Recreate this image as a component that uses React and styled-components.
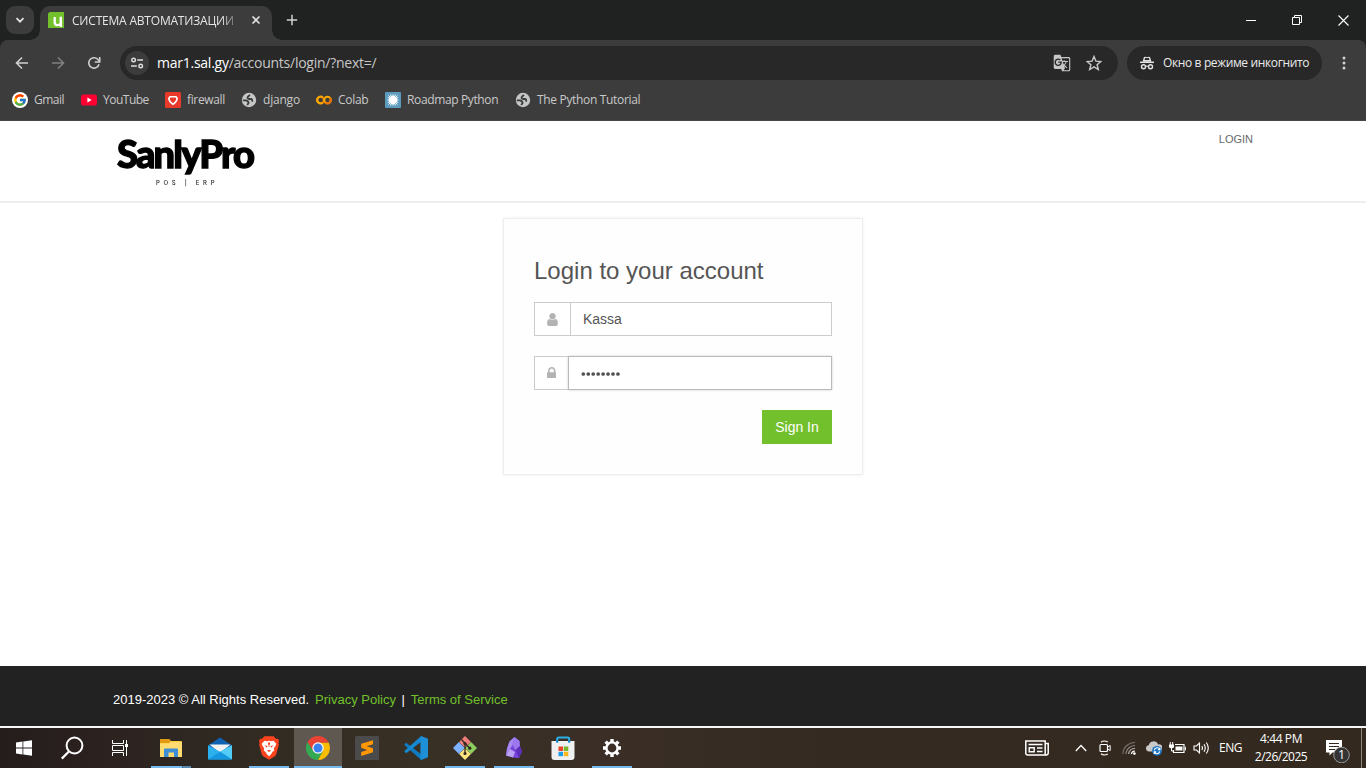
import React from "react";
import styled, { createGlobalStyle } from "styled-components";
import { FcGoogle } from "react-icons/fc";
import { MdGTranslate } from "react-icons/md";

const UI = `"Open Sans", "Noto Sans", sans-serif`;
const ARIAL = `"Liberation Sans", Arial, sans-serif`;

const Global = createGlobalStyle`
  * { box-sizing: border-box; }
  html, body { margin: 0; padding: 0; height: 768px; overflow: hidden; background: #fff; }
  svg { display: block; flex: none; }
`;

const Screen = styled.div`
  width: 1366px;
  height: 768px;
  display: flex;
  flex-direction: column;
  overflow: hidden;
  font-family: ${UI};
`;

const Label = styled.span`
  font-size: ${(p) => p.$size || 12}px;
  letter-spacing: ${(p) => p.$track || 0}px;
  line-height: 16px;
  white-space: nowrap;
`;

/* ---------- browser frame ---------- */

const TabStrip = styled.header`
  height: 40px;
  background: #202221;
  display: flex;
  align-items: flex-end;
  padding-left: 6px;
`;

const TabSearch = styled.div`
  width: 28px;
  height: 28px;
  margin-bottom: 6px;
  border-radius: 9px;
  background: #3c3c3c;
  display: flex;
  align-items: center;
  justify-content: center;
`;

const Tab = styled.div`
  position: relative;
  width: 232px;
  height: 34px;
  margin-left: 6px;
  padding: 0 9px 6px 8px;
  border-radius: 10px 10px 0 0;
  background: #3c3c3c;
  display: flex;
  align-items: center;
  color: #e6e6e6;
  &::before, &::after {
    content: "";
    position: absolute;
    bottom: 0;
    width: 10px;
    height: 10px;
  }
  &::before { left: -10px; background: radial-gradient(circle at 0 0, transparent 9.5px, #3c3c3c 10px); }
  &::after { right: -10px; background: radial-gradient(circle at 100% 0, transparent 9.5px, #3c3c3c 10px); }
`;

const TabTitle = styled.div`
  width: 166px;
  margin-left: 8px;
  margin-right: 11px;
  padding-top: 1px;
  display: flex;
  mask-image: linear-gradient(to right, #000 150px, transparent 168px);
`;

const NewTab = styled.div`
  width: 28px;
  height: 40px;
  margin-left: 6px;
  display: flex;
  align-items: center;
  justify-content: center;
`;

const WindowButtons = styled.div`
  margin-left: auto;
  display: flex;
`;

const WindowButton = styled.div`
  width: 46px;
  height: 40px;
  display: flex;
  align-items: center;
  justify-content: center;
`;

const ToolbarBack = styled.div`
  background: #202221;
`;

const Toolbar = styled.div`
  height: 46px;
  background: #3c3c3c;
  border-radius: 8px 8px 0 0;
  display: flex;
  align-items: center;
  padding-left: 4px;
`;

const NavButton = styled.div`
  width: 36px;
  height: 34px;
  display: flex;
  align-items: center;
  justify-content: center;
`;

const Omnibox = styled.div`
  width: 998px;
  height: 34px;
  margin-left: 8px;
  border-radius: 17px;
  background: #282828;
  padding: 0 16px 0 5px;
  display: flex;
  align-items: center;
  color: #c7c7c7;
`;

const SiteInfo = styled.div`
  width: 24px;
  height: 24px;
  border-radius: 50%;
  background: #3c3c3c;
  display: flex;
  align-items: center;
  justify-content: center;
  margin-right: 8px;
`;

const Host = styled.span`
  color: #fff;
`;

const OmniActions = styled.div`
  margin-left: auto;
  display: flex;
  gap: 15px;
  align-items: center;
`;

const Incognito = styled.div`
  width: 195px;
  height: 34px;
  margin-left: 9px;
  border-radius: 17px;
  background: #282828;
  padding-left: 12px;
  display: flex;
  align-items: center;
  gap: 8px;
  color: #eaeaea;
`;

const MenuDots = styled.div`
  width: 44px;
  display: flex;
  justify-content: center;
`;

const Bookmarks = styled.nav`
  height: 35px;
  background: #3c3c3c;
  border-bottom: 1px solid #474747;
  padding: 0 0 6px 12px;
  display: flex;
  align-items: center;
  color: #c9c9c9;
`;

const Bookmark = styled.div`
  width: ${(p) => p.$width}px;
  display: flex;
  align-items: center;
  gap: 6px;
`;

const WhiteDisc = styled.span`
  width: 16px;
  height: 16px;
  border-radius: 50%;
  background: #fff;
  display: flex;
  align-items: center;
  justify-content: center;
`;

/* ---------- web page ---------- */

const Page = styled.main`
  height: 607px;
  background: #fff;
  font-family: ${ARIAL};
  display: flex;
  flex-direction: column;
  border-bottom: 2px solid #f7f7f5;
`;

const SiteHeader = styled.div`
  height: 82px;
  border-bottom: 2px solid #eee;
  padding: 0 113px 0 117px;
  display: flex;
  justify-content: space-between;
`;

const Logo = styled.div`
  width: 140px;
  padding-top: 10px;
  color: #000;
  display: flex;
  flex-direction: column;
  will-change: transform;
`;

const LogoName = styled.div`
  font: 900 38px/44px Lato, sans-serif;
  letter-spacing: -1.8px;
  white-space: nowrap;
  -webkit-text-stroke: 1.3px #000;
`;

const LogoTag = styled.div`
  font: 500 6px/8px Inter, sans-serif;
  letter-spacing: 3.700px;
  margin: 4px 0 0 39px;
  white-space: pre;
  color: #222;
`;

const LoginLink = styled.a`
  margin-top: 12px;
  height: 13px;
  font-size: 11px;
  line-height: 13px;
  color: #66696b;
`;

const Body = styled.div`
  flex: 1;
  padding-top: 15px;
  display: flex;
  justify-content: center;
  align-items: flex-start;
`;

const Card = styled.form`
  width: 360px;
  height: 257px;
  border: 1px solid #eee;
  background: #fefefe;
  box-shadow: 0 0 3px #eee;
  padding: 36px 30px 30px;
  display: flex;
  flex-direction: column;
`;

const Title = styled.h2`
  margin: 0 0 15px;
  font-size: 24px;
  font-weight: 400;
  line-height: 32px;
  color: #555;
  white-space: nowrap;
`;

const Field = styled.div`
  display: flex;
  height: 34px;
  margin-bottom: 20px;
`;

const Addon = styled.span`
  width: ${(p) => p.$width}px;
  border: 1px solid #ccc;
  border-right: 0;
  background: #fff;
  padding-bottom: ${(p) => p.$lift || 0}px;
  display: flex;
  align-items: center;
  justify-content: center;
`;

const Input = styled.div`
  flex: 1;
  border: 1px solid ${(p) => (p.$focus ? "#bbb" : "#ccc")};
  box-shadow: ${(p) => (p.$focus ? "0 0 2px #c9c9c9" : "none")};
  background: #fff;
  padding-left: 12px;
  display: flex;
  align-items: center;
  font-size: 14px;
  color: #555;
`;

const SignIn = styled.button`
  align-self: flex-end;
  width: 70px;
  height: 34px;
  border: 0;
  padding: 0;
  background: #72c02c;
  color: #fff;
  font: 14px/20px ${ARIAL};
`;

const Footer = styled.footer`
  height: 60px;
  background: #222;
  color: #fff;
  padding: 7px 0 0 113px;
  display: flex;
  align-items: center;
  font-size: 13px;
  white-space: pre;
`;

const FooterLink = styled.a`
  margin: 0 5.500px 0 6px;
  color: #72c02c;
`;

/* ---------- taskbar ---------- */

const Taskbar = styled.footer`
  height: 40px;
  background: linear-gradient(90deg, #241d1c 0, #2c2220 110px, #302a22 230px, #383024 420px, #3a2e26 600px, #342a21 850px, #33291f 100%);
  display: flex;
  color: #fff;
`;

const TaskButton = styled.div`
  width: ${(p) => p.$width || 48}px;
  height: 40px;
  margin-right: ${(p) => p.$after || 0}px;
  background: ${(p) => (p.$active ? "#5f5850" : "transparent")};
  display: flex;
  flex-direction: column;
  align-items: center;
  justify-content: space-between;
`;

const TaskIcon = styled.div`
  height: 38px;
  padding-top: 2px;
  display: flex;
  align-items: center;
`;

const Underline = styled.div`
  width: ${(p) => p.$width}px;
  height: 2px;
  background: ${(p) => (p.$stack ? "linear-gradient(90deg,#76b9ed 31px,#426f92 31px,#426f92 32px,#5789b0 32px)" : "#76b9ed")};
`;

const Tray = styled.div`
  margin-left: auto;
  display: flex;
  align-items: center;
`;

const TrayItem = styled.div`
  width: ${(p) => p.$width || 24}px;
  height: 40px;
  display: flex;
  align-items: center;
  justify-content: center;
`;

const Clock = styled.div`
  width: 66px;
  display: flex;
  flex-direction: column;
  align-items: center;
  gap: 2px;
`;

const ShowDesktop = styled.div`
  width: 5px;
  height: 40px;
  border-left: 1px solid #8a857e;
`;

/* ---------- icons ---------- */

const Svg = ({ w = 16, h = w, box, children, ...rest }) => (
  <svg width={w} height={h} viewBox={box || `0 0 ${w} ${h}`} fill="none" {...rest}>
    {children}
  </svg>
);

const Globe = () => (
  <Svg>
    <circle cx="8" cy="8" r="7.200" fill="#c4c7c5" />
    <path d="M9 2.800L6.800 4.800Q6 6.300 7.800 7H10Q11.800 7.400 11 9.600" stroke="#3c3c3c" strokeWidth="1.800" />
    <path d="M1.800 8.300H5Q7.600 8.900 7.600 11L6.200 13" stroke="#3c3c3c" strokeWidth="1.800" />
  </Svg>
);

const bookmarks = [
  { text: "Gmail", width: 69, track: -0.5, icon: <WhiteDisc><FcGoogle size={14} /></WhiteDisc> },
  {
    text: "YouTube", width: 84, track: -0.5, icon: (
      <Svg><rect y="2.500" width="16" height="11" rx="2.600" fill="#f03" /><path d="M6.400 5.600v4.800L10.600 8z" fill="#fff" /></Svg>
    ),
  },
  {
    text: "firewall", width: 76, track: -0.35, icon: (
      <Svg><rect width="16" height="16" rx="1.500" fill="#e8392b" /><path d="M5 4.800h6l1.200 1.700q-.4 3.400-4.200 5.900-3.800-2.500-4.200-5.900z" stroke="#fff" strokeWidth="1.600" strokeLinejoin="round" /></Svg>
    ),
  },
  { text: "django", width: 75, track: -0.2, icon: <Globe /> },
  {
    text: "Colab", width: 69, track: -0.3, icon: (
      <Svg><circle cx="4.500" cy="8" r="3.300" stroke="#e8710a" strokeWidth="2.100" /><circle cx="11.500" cy="8" r="3.300" stroke="#f9ab00" strokeWidth="2.100" /><path d="M6.800 5.600A3.300 3.300 0 1 0 6.800 10.400" stroke="#f9ab00" strokeWidth="2.100" /><path d="M9.200 10.400a3.300 3.300 0 0 0 4.700-4.700" stroke="#e8710a" strokeWidth="2.100" /></Svg>
    ),
  },
  {
    text: "Roadmap Python", width: 130, track: -0.37, icon: (
      <Svg><rect width="16" height="16" rx="1" fill="#5b9bbd" /><circle cx="8" cy="8" r="4.200" fill="#fff" /><path d="M8 2.500v11M2.500 8h11M3.500 3.500l9 9M12.500 3.500l-9 9M5.500 2.500l5 11M10.500 2.500l-5 11M2.800 5.500l10.400 5M2.800 10.500l10.400-5" stroke="#fff" strokeWidth="1" /></Svg>
    ),
  },
  { text: "The Python Tutorial", width: 130, track: -0.33, icon: <Globe /> },
];

const WindowsIcon = () => (
  <Svg w={16}><path d="M0 2.400l6.500-.9v6H0zM7.300 1.400L16 .2v7.300H7.300zM0 8.400h6.500v6L0 13.600zM7.300 8.400H16v7.400l-8.700-1.200z" fill="#fff" /></Svg>
);
const SearchIcon = () => (
  <Svg w={23} h={24}><circle cx="13.500" cy="9.500" r="7.900" stroke="#fff" strokeWidth="2" /><path d="M7.900 15.500L.8 22.600" stroke="#fff" strokeWidth="2.200" /></Svg>
);
const TaskViewIcon = () => (
  <Svg w={18} h={16}><path d="M1.500 0v3.500h11V0M1.500 16v-3.500h11V16M1.500 5.500h11v5h-11zM15.500 0v16" stroke="#fff" /><rect x="14" y="4" width="3" height="3" fill="#fff" /></Svg>
);
const ExplorerIcon = () => (
  <Svg w={22} h={18}>
    <path d="M0 1a1 1 0 0 1 1-1h8l2 2h10a1 1 0 0 1 1 1v15H0z" fill="#ffca3d" />
    <path d="M0 1a1 1 0 0 1 1-1h8l1.500 2.500L9 4H0z" fill="#e09a14" />
    <path d="M0 4.500h9l2-1.500h11v15H0z" fill="#ffdb70" />
    <path d="M4 18v-7.500a1 1 0 0 1 1-1h12a1 1 0 0 1 1 1V18h-4v-4.500H8.500V18z" fill="#3e8ed6" />
  </Svg>
);
const MailIcon = () => (
  <Svg w={24} h={23}><path d="M0 8.500L12 .5l12 8V12H0z" fill="#0f63b4" /><path d="M1.500 7.500h21L12 16z" fill="#f2f2f2" /><path d="M0 8.200l12 6.600L24 8.200V21.500a1 1 0 0 1-1 1H1a1 1 0 0 1-1-1z" fill="#2bb0ee" /><path d="M12 14.800L24 8.200v14z" fill="#53ccf7" /><path d="M0 22.500L12 14.800l12 7.700z" fill="#1597e0" /></Svg>
);
const BraveIcon = () => (
  <Svg w={22} h={24}>
    <path d="M5.500 1.200L6.300.2h9.400l.8 1L18.400 3l1.700-.2L21 5l-.6 2.200.5 1.600-2.700 9.400c-.3 1-1.200 1.900-2.200 2.600L11 23.800l-5-3c-1-.7-1.900-1.600-2.200-2.600L1.100 8.800l.5-1.600L1 5l.9-2.200 1.700.2z" fill="#fb4320" />
    <path d="M11 4.700l2 .6 2.500-.5 2.800 3-.6 1.700-1.900 3 .5 2-2 1.600-1.200 2.100L11 20.300 8.900 18.200l-1.200-2.100-2-1.600.5-2-1.900-3-.6-1.700 2.800-3 2.500.5z" fill="#fff" />
    <path d="M6.300 9.200l3.200.9-.5 1.600zM15.700 9.200l-3.200.9.500 1.600zM9.800 6.600L11 11.800l1.200-5.200M8.700 14.600l2.300 1.500 2.300-1.500-2.300-.7z" fill="#fb4320" />
  </Svg>
);
const ChromeIcon = () => (
  <Svg w={24}>
    <path d="M1.600 6l5.600 9L12 17.500 17 15 12 24A12 12 0 0 1 1.600 6z" fill="#34a853" />
    <path d="M12 6.500h10.600A12 12 0 0 1 12 24l5-9z" fill="#fbbc04" />
    <path d="M12 6.500H22.600L22.400 6A12 12 0 0 0 1.600 6l5.700 9z" fill="#ea4335" />
    <circle cx="12" cy="12" r="5.700" fill="#fff" /><circle cx="12" cy="12" r="4.500" fill="#3b82f0" />
  </Svg>
);
const SublimeIcon = () => (
  <Svg w={24}><rect width="24" height="24" rx="1.500" fill="#4b4b4b" /><path d="M6.200 7.800L18 4.200v4L11.600 10.200l6.400 2v4L6.200 20v-4l6.200-2-6.200-2.200z" fill="#ff9800" /></Svg>
);
const VsCodeIcon = () => (
  <Svg w={24}>
    <path d="M.5 8.200L2.200 6.700l15 11.500V24L.6 9.300z" fill="#0f7bc1" />
    <path d="M.5 15.800l1.700 1.500 15-11.500V0L.6 14.700z" fill="#1488d1" />
    <path d="M17.200 0L24 2.800v18.400L17.200 24c-.6-.3-.8-1-.8-1.500V1.500c0-.5.200-1.200.8-1.500z" fill="#1c8fd6" />
  </Svg>
);
const GitIcon = () => (
  <Svg w={24}>
    <path d="M12 0l5.900 5.900L12 11.800 6.100 5.900z" fill="#f27d7d" /><path d="M18.100 6.100L24 12l-5.900 5.900L12.200 12z" fill="#8ccf5e" />
    <path d="M5.900 6.100L11.800 12l-5.900 5.900L0 12z" fill="#80b3ff" /><path d="M12 12.200l5.900 5.900L12 24l-5.900-5.900z" fill="#ffe680" />
    <path d="M8.500 3.500l8.500 9M12 7.500V18" stroke="#33291f" strokeWidth="1.300" /><circle cx="12" cy="7.500" r="1.600" fill="#33291f" /><circle cx="16.800" cy="12.200" r="1.600" fill="#33291f" /><circle cx="12" cy="17.500" r="1.600" fill="#33291f" />
  </Svg>
);
const ObsidianIcon = () => (
  <Svg w={18} h={22}><path d="M9.500 0l5 4 .4 5 2.100 5.500-3 6.500-6-.5L1 18.500l1-7 2.500-7z" fill="#7a45dc" /><path d="M9.500 0L7.500 8 5 12l-4 6.500 1-7 2.500-7z" fill="#a68af0" /><path d="M9.500 0l5 4 .4 5-4.400 4-3-5z" fill="#9c78ee" /><path d="M5 12l5 3-2 5.500-7-2z" fill="#b9a2f5" /><path d="M10.500 13l4.400-4 2.100 5.500-3 6.500z" fill="#5b2db8" /></Svg>
);
const StoreIcon = () => (
  <Svg w={24}>
    <path d="M.5 5h23v16a3 3 0 0 1-3 3h-17a3 3 0 0 1-3-3z" fill="#f0f0f0" />
    <path d="M6.200 6.500V3.100A1.600 1.600 0 0 1 7.800 1.500h8.800A1.600 1.600 0 0 1 18.200 3.100V6.500" stroke="#2bafe8" strokeWidth="2" />
    <path d="M6.200 4.500v2M18.200 4.500v2" stroke="#1282c8" strokeWidth="2" />
    <path d="M7.500 10.500H12V15H7.500z" fill="#e8442a" /><path d="M12.800 10.500h4.500V15h-4.500z" fill="#75b726" /><path d="M7.500 15.800H12v4.400H7.500z" fill="#1b9fe8" /><path d="M12.800 15.800h4.500v4.400h-4.500z" fill="#fcb816" />
  </Svg>
);
const GearIcon = () => (
  <Svg w={20}>
    <g stroke="#fff" strokeWidth="3.400">
      {[0, 45, 90, 135].map((a) => <path key={a} d="M10 1v3M10 16v3" transform={`rotate(${a} 10 10)`} />)}
    </g>
    <circle cx="10" cy="10" r="5.600" stroke="#fff" strokeWidth="2.400" />
  </Svg>
);

const tasks = [
  { icon: <WindowsIcon /> },
  { icon: <SearchIcon /> },
  { icon: <TaskViewIcon />, after: 3 },
  { icon: <ExplorerIcon />, line: 40, stack: true, after: 1 },
  { icon: <MailIcon />, after: 1 },
  { icon: <BraveIcon />, line: 40, after: 1 },
  { icon: <ChromeIcon />, line: 48, active: true, after: 1 },
  { icon: <SublimeIcon />, after: 1 },
  { icon: <VsCodeIcon />, after: 1 },
  { icon: <GitIcon />, line: 40, after: 1 },
  { icon: <ObsidianIcon />, line: 40, after: 1 },
  { icon: <StoreIcon />, after: 1 },
  { icon: <GearIcon />, line: 40 },
];

function BrowserChrome() {
  return (
    <>
      <TabStrip>
        <TabSearch><Svg w={10}><path d="M1.500 3.200L5 6.700l3.500-3.500" stroke="#e3e3e3" strokeWidth="1.700" /></Svg></TabSearch>
        <Tab>
          <Svg><path d="M2.500 0H16v16H0V2.500A2.500 2.500 0 0 1 2.500 0z" fill="#72c02c" /><path d="M6.700 5v5.600c0 3.300 4.900 3.300 6 .8V5M12.900 4.800V15" stroke="#fff" strokeWidth="2.300" /></Svg>
          <TabTitle><Label $track={-0.2}>СИСТЕМА АВТОМАТИЗАЦИИ</Label></TabTitle>
          <Svg w={14}><path d="M3.500 3.500l7 7M10.500 3.500l-7 7" stroke="#e3e3e3" strokeWidth="1.600" /></Svg>
        </Tab>
        <NewTab><Svg w={12}><path d="M6 .8v10.400M.8 6h10.400" stroke="#d0d0d0" strokeWidth="1.500" /></Svg></NewTab>
        <WindowButtons>
          <WindowButton><Svg w={10}><path d="M0 5.500h10" stroke="#fff" /></Svg></WindowButton>
          <WindowButton><Svg w={10}><path d="M.5 2.500h7v7h-7zM2.500 2.500v-2h7v7h-2" stroke="#fff" /></Svg></WindowButton>
          <WindowButton><Svg w={11}><path d="M.5.500l10 10M10.500.500l-10 10" stroke="#fff" strokeWidth="1.100" /></Svg></WindowButton>
        </WindowButtons>
      </TabStrip>
      <ToolbarBack>
        <Toolbar>
          <NavButton><Svg w={14}><path d="M13 7H1.800M7 1.500L1.500 7 7 12.500" stroke="#d0d0d0" strokeWidth="1.600" /></Svg></NavButton>
          <NavButton><Svg w={14}><path d="M1 7h11.200M7 1.500L12.500 7 7 12.500" stroke="#808080" strokeWidth="1.600" /></Svg></NavButton>
          <NavButton><Svg w={14}><path d="M12 8.200A5.200 5.200 0 1 1 10.700 3.300L12.500 5.200" stroke="#d0d0d0" strokeWidth="1.600" /><path d="M12.700 1v5H7.800" stroke="#d0d0d0" strokeWidth="1.600" /></Svg></NavButton>
          <Omnibox>
            <SiteInfo><Svg w={14}><circle cx="3.600" cy="4" r="1.800" stroke="#dedede" strokeWidth="1.400" /><path d="M7.200 4H13M1 10h5.800" stroke="#dedede" strokeWidth="1.500" /><circle cx="10.700" cy="10" r="1.800" stroke="#dedede" strokeWidth="1.400" /></Svg></SiteInfo>
            <Label $size={14} $track={-0.25}><Host>mar1.sal.gy</Host>/accounts/login/?next=/</Label>
            <OmniActions>
              <MdGTranslate size={18} color="#c7c7c7" />
              <Svg><path d="M8 1.500l1.900 4.600 5 .4-3.800 3.200 1.200 4.800L8 11.900l-4.300 2.600 1.200-4.800L1.100 6.500l5-.4z" stroke="#c7c7c7" strokeWidth="1.400" /></Svg>
            </OmniActions>
          </Omnibox>
          <Incognito>
            <Svg><path d="M1 7.300h14" stroke="#e3e3e3" strokeWidth="1.500" /><path d="M3.500 6.800L4.800 2.600c.3-1 1.100-1 1.700-.8L8 2.200l1.500-.4c.6-.2 1.400-.2 1.700.8l1.300 4.200z" fill="#e3e3e3" /><path d="M5.500 5l.8-2.300L8 3.300l1.700-.6.8 2.300z" fill="#282828" /><circle cx="4.500" cy="11.700" r="2" stroke="#e3e3e3" strokeWidth="1.400" /><circle cx="11.500" cy="11.700" r="2" stroke="#e3e3e3" strokeWidth="1.400" /><path d="M6.500 11.500q1.500-1 3 0" stroke="#e3e3e3" strokeWidth="1.200" /></Svg>
            <Label $track={-0.37}>Окно в режиме инкогнито</Label>
          </Incognito>
          <MenuDots><Svg w={4} h={14}><circle cx="2" cy="2" r="1.500" fill="#d0d0d0" /><circle cx="2" cy="7" r="1.500" fill="#d0d0d0" /><circle cx="2" cy="12" r="1.500" fill="#d0d0d0" /></Svg></MenuDots>
        </Toolbar>
      </ToolbarBack>
      <Bookmarks>
        {bookmarks.map((b) => (
          <Bookmark key={b.text} $width={b.width}>{b.icon}<Label $track={b.track}>{b.text}</Label></Bookmark>
        ))}
      </Bookmarks>
    </>
  );
}

function LoginPage() {
  return (
    <Page>
      <SiteHeader>
        <Logo>
          <LogoName>SanlyPro</LogoName>
          <LogoTag>POS | ERP</LogoTag>
        </Logo>
        <LoginLink>LOGIN</LoginLink>
      </SiteHeader>
      <Body>
        <Card>
          <Title>Login to your account</Title>
          <Field>
            <Addon $width={36}><Svg w={11} h={13} box="0 0 1280 1536"><path fill="#b3b3b3" d="M1280 1271q0 109-62.500 187t-150.500 78H213q-88 0-150.500-78T0 1271q0-85 8.500-160.500t31.500-152 58.500-131 94-89T327 704q131 128 313 128t313-128q78 0 134.500 34.500t94 89 58.500 131 31.500 152 8.500 160.500zM1024 384q0 159-112.500 271.500T640 768 368.500 655.500 256 384t112.500-271.500T640 0t271.500 112.500T1024 384z" /></Svg></Addon>
            <Input>Kassa</Input>
          </Field>
          <Field>
            <Addon $width={34} $lift={1}><Svg w={9.5} h={11.5} box="0 128 1152 1408"><path fill="#b3b3b3" d="M320 768h512V576q0-106-75-181t-181-75-181 75-75 181v192zm832 96v576q0 40-28 68t-68 28H96q-40 0-68-28t-28-68V864q0-40 28-68t68-28h32V576q0-184 132-316t316-132 316 132 132 316v192h32q40 0 68 28t28 68z" /></Svg></Addon>
            <Input $focus>
              <Svg w={41} h={5}>
                {Array.from({ length: 8 }, (_, i) => <circle key={i} cx={2.3 + i * 4.95} cy="3" r="1.850" fill="#505050" />)}
              </Svg>
            </Input>
          </Field>
          <SignIn type="button">Sign In</SignIn>
        </Card>
      </Body>
      <Footer>2019-2023 © All Rights Reserved.<FooterLink>Privacy Policy</FooterLink>|<FooterLink>Terms of Service</FooterLink></Footer>
    </Page>
  );
}

function SystemBar() {
  return (
    <Taskbar>
      {tasks.map((t, i) => (
        <TaskButton key={i} $active={t.active} $after={t.after}>
          <TaskIcon>{t.icon}</TaskIcon>
          {t.line && <Underline $width={t.line} $stack={t.stack} />}
        </TaskButton>
      ))}
      <Tray>
        <TrayItem $width={64}><Svg w={24} h={16}><path d="M.800 1h19.400v14H2.500A1.700 1.700 0 0 1 .8 13.300zM20.200 3.500h3v9.800a1.700 1.700 0 0 1-3 1" stroke="#fff" strokeWidth="1.500" /><path d="M3.500 4.500h14M12 8h5.500M12 11.500h5.500" stroke="#fff" strokeWidth="1.300" /><path d="M4.200 7.700h5v4h-5z" stroke="#fff" strokeWidth="1.400" /></Svg></TrayItem>
        <TrayItem $width={24}><Svg w={12} h={8}><path d="M.8 7L6 1.500 11.200 7" stroke="#fff" strokeWidth="1.300" /></Svg></TrayItem>
        <TrayItem><Svg w={12} h={16}><path d="M2 2.200Q5 -.2 8.800 2M2 13.800q3 2.400 6.800.2" stroke="#fff" strokeWidth="1.100" /><rect x="1" y="4.500" width="7.500" height="7" rx="1" stroke="#fff" strokeWidth="1.200" /><path d="M8.500 7l2.700-1.500v5L8.500 9" stroke="#fff" /></Svg></TrayItem>
        <TrayItem><Svg w={14}><g strokeWidth="1.200"><path d="M.8 13A12 12 0 0 1 13 1.500" stroke="#77706a" /><path d="M3.800 13A9.200 9.200 0 0 1 13 4.500" stroke="#8d8780" /><path d="M6.600 13A6.400 6.400 0 0 1 13 7.300" stroke="#aaa59f" /><path d="M9.300 13A3.800 3.800 0 0 1 13 10" stroke="#fff" /></g><circle cx="12.400" cy="12.600" r="1.300" fill="#fff" /></Svg></TrayItem>
        <TrayItem><Svg w={17} h={15}><path d="M3.500 10.500a3.200 3.200 0 0 1 .3-6.300A4.800 4.800 0 0 1 13 3.500a3.500 3.500 0 0 1 2 7z" fill="#c9c9c9" /><circle cx="12" cy="9.800" r="4.900" fill="#1b74c5" /><path d="M9.300 9.300A2.800 2.800 0 0 1 14.700 8.500M14.700 10.400a2.800 2.800 0 0 1-5.300.7M14.900 6.800v2h-2M9.200 12.900v-2h2" stroke="#fff" strokeWidth="1.100" /></Svg></TrayItem>
        <TrayItem><Svg w={17} h={12}><path d="M6 2.500h9v8H4.500V8" stroke="#fff" strokeWidth="1.200" /><path d="M6.500 4.500h7v4h-7z" fill="#fff" /><path d="M16.400 4.800v3.500" stroke="#fff" /><path d="M0 2.500h5v2.200q0 1.500-2.500 1.500T0 4.700z" fill="#fff" /><path d="M1.300 0v3M3.700 0v3M2.500 6v3h2" stroke="#fff" /></Svg></TrayItem>
        <TrayItem><Svg w={17} h={14}><path d="M1 5h2.500L6.500 2v10L3.500 9H1z" stroke="#fff" strokeWidth="1.100" /><path d="M8.800 5q1.300 2 0 4M11 3.300q2.500 3.700 0 7.400M13.300 1.500q4 5.500 0 11" stroke="#fff" strokeWidth="1.100" /></Svg></TrayItem>
        <TrayItem $width={35}><Label $track={-0.4}>ENG</Label></TrayItem>
        <Clock><Label $track={-0.4}>4:44 PM</Label><Label $track={-0.5}>2/26/2025</Label></Clock>
        <TrayItem $width={47}><Svg w={26} h={30}><path d="M1 7h16v12.500H7.500L4.500 22.500v-3H1z" fill="#fff" /><path d="M4 10.500h10M4 13.500h10M4 16.500h6" stroke="#33291f" /><circle cx="16.500" cy="22" r="7.800" fill="#343434" stroke="#999" /><text x="16.500" y="26.300" textAnchor="middle" fill="#fff" fontSize="12.500" fontFamily="Open Sans, sans-serif">1</text></Svg></TrayItem>
        <ShowDesktop />
      </Tray>
    </Taskbar>
  );
}

export default function App() {
  return (
    <Screen>
      <Global />
      <BrowserChrome />
      <LoginPage />
      <SystemBar />
    </Screen>
  );
}
